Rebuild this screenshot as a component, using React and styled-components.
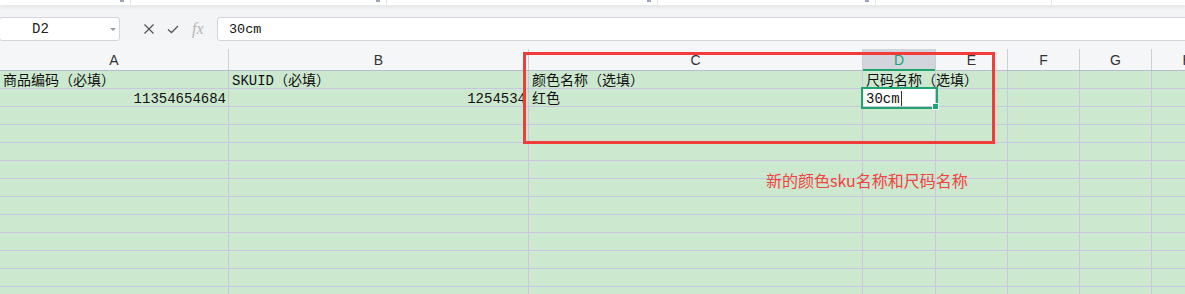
import React from "react"
import styled, { createGlobalStyle } from "styled-components"

const GlobalStyle = createGlobalStyle`
  html, body {
    margin: 0;
    padding: 0;
    background: #f3f4f6;
    overflow: hidden;
  }
  * { box-sizing: border-box; }
`

const COLS = ["A", "B", "C", "D", "E", "F", "G", "H"]
const TEMPLATE = "229px 300px 334px 73px 72px 72px 72px 72px"
const GRID = "#c8c6e0"
const GREEN = "#20a471"

const rows = [
  ["商品编码（必填）", "SKUID（必填）", "颜色名称（选填）", "尺码名称（选填）"],
  [
    { text: "11354654684", right: true },
    { text: "1254534", right: true },
    "红色",
    { text: "30cm", editing: true },
  ],
]

const Page = styled.div`
  position: relative;
  width: 1185px;
  height: 294px;
  overflow: hidden;
  font-family: "Liberation Mono", "Noto Sans CJK SC", monospace;
`

const TopStrip = styled.div`
  display: flex;
  height: 5px;
  background: #fff;
  box-shadow: 0 2px 4px rgba(0, 0, 0, 0.07);
  position: relative;
  z-index: 1;
`

const Tab = styled.div`
  width: ${(p) => p.$w}px;
  flex: ${(p) => (p.$w ? "none" : "1")};
  display: flex;
  justify-content: flex-end;
  border-right: ${(p) => (p.$w ? "1px solid #e4e6ea" : "none")};
`

const Mark = styled.span`
  width: 4px;
  height: 2px;
  margin-right: 6px;
  background: #9aa3b8;
`

const FormulaRow = styled.div`
  display: flex;
  align-items: stretch;
  height: 36px;
  padding-top: 12px;
  background: #f3f4f6;
`

const NameBox = styled.div`
  width: 121px;
  margin-left: -1px;
  height: 24px;
  background: #fff;
  border: 1px solid #d2d5db;
  border-radius: 3px;
  display: flex;
  align-items: center;
  padding-left: 32px;
  font-size: 14px;
  color: #222;
`

const NameText = styled.span`
  flex: 1;
`

const Caret = styled.span`
  width: 0;
  height: 0;
  margin-right: 3px;
  border-left: 3px solid transparent;
  border-right: 3px solid transparent;
  border-top: 3px solid #9a9a9a;
`

const Tools = styled.div`
  width: 97px;
  display: flex;
  align-items: center;
  padding-left: 23px;
  gap: 12px;
`

const Fx = styled.span`
  font-family: "Liberation Serif", serif;
  font-style: italic;
  font-size: 16px;
  color: #b4b4b4;
  margin-left: 1px;
`

const FormulaInput = styled.div`
  flex: 1;
  height: 24px;
  margin-right: -4px;
  background: #fff;
  border: 1px solid #d2d5db;
  border-radius: 3px;
  display: flex;
  align-items: center;
  padding-left: 11px;
  font-size: 13.5px;
  color: #111;
`

const HeaderRow = styled.div`
  display: grid;
  grid-template-columns: ${TEMPLATE};
  height: 30px;
  align-items: end;
  background: #f5f6f8;
  border-bottom: 1px solid #b9bccb;
`

const HeaderCell = styled.div`
  display: flex;
  align-items: center;
  justify-content: center;
  border-right: 1px solid #cbcdd8;
  font-family: "Liberation Sans", "Noto Sans CJK SC", sans-serif;
  font-size: 14px;
  color: ${(p) => (p.$active ? GREEN : "#333")};
  background: ${(p) => (p.$active ? "#d3d5dd" : "transparent")};
  box-shadow: ${(p) => (p.$active ? `inset 0 -2px 0 ${GREEN}` : "none")};
  margin-bottom: ${(p) => (p.$active ? "-1px" : "0")};
  height: ${(p) => (p.$active ? "22px" : "21px")};
`

const Grid = styled.div`
  display: grid;
  grid-template-columns: ${TEMPLATE};
  grid-auto-rows: 18px;
  background: #cce8cf;
`

const Cell = styled.div`
  position: relative;
  border-right: 1px solid ${GRID};
  border-bottom: 1px solid ${GRID};
  padding: 2px 2px 0 3px;
  font-size: 14px;
  line-height: 16px;
  color: #111;
  white-space: nowrap;
  text-align: ${(p) => (p.$right ? "right" : "left")};
  overflow: ${(p) => (p.$right ? "hidden" : "visible")};
  z-index: ${(p) => (p.$editing ? 2 : 1)};
  background: ${(p) => (p.$editing ? "#fff" : "transparent")};
  box-shadow: ${(p) => (p.$editing ? `0 0 0 2px ${GREEN}` : "none")};

  ${(p) =>
    p.$editing &&
    `
    &::after {
      content: "";
      position: absolute;
      right: -4px;
      bottom: -4px;
      width: 5px;
      height: 5px;
      background: ${GREEN};
      border: 1px solid #fff;
    }
  `}
`

const Cursor = styled.span`
  display: inline-block;
  width: 1px;
  height: 15px;
  margin-left: 1px;
  vertical-align: -3px;
  background: #333;
`

const Highlight = styled.div`
  position: absolute;
  left: 523px;
  top: 52px;
  width: 472px;
  height: 92px;
  border: 3px solid #f23b3b;
  pointer-events: none;
  z-index: 5;
`

const Note = styled.div`
  position: absolute;
  left: 766px;
  top: 170px;
  font-family: "Noto Sans CJK SC", "Liberation Sans", sans-serif;
  font-size: 16px;
  line-height: 20px;
  color: #f0443f;
  z-index: 5;
`

function XIcon() {
  return (
    <svg width="12" height="12" viewBox="0 0 12 12" fill="none" stroke="#555" strokeWidth="1.3">
      <path d="M1.5 1.5 L10.5 10.5 M10.5 1.5 L1.5 10.5" />
    </svg>
  )
}

function CheckIcon() {
  return (
    <svg width="12" height="12" viewBox="0 0 12 12" fill="none" stroke="#555" strokeWidth="1.3">
      <path d="M1 6.5 L4.5 9.5 L11 3" />
    </svg>
  )
}

function Sheet() {
  const allRows = [...rows]
  while (allRows.length < 13) allRows.push([])

  return (
    <Grid>
      {allRows.map((row, r) =>
        COLS.map((_, c) => {
          const raw = row[c]
          const cell = typeof raw === "string" ? { text: raw } : raw || {}
          return (
            <Cell key={`${r}-${c}`} $right={cell.right} $editing={cell.editing}>
              {cell.text}
              {cell.editing && <Cursor />}
            </Cell>
          )
        })
      )}
    </Grid>
  )
}

export default function App() {
  return (
    <Page>
      <GlobalStyle />
      <TopStrip>
        {[131, 256, 271, 218, 176].map((w, i) => (
          <Tab key={i} $w={w}>
            {i < 4 && <Mark />}
          </Tab>
        ))}
        <Tab />
      </TopStrip>

      <FormulaRow>
        <NameBox>
          <NameText>D2</NameText>
          <Caret />
        </NameBox>
        <Tools>
          <XIcon />
          <CheckIcon />
          <Fx>fx</Fx>
        </Tools>
        <FormulaInput>30cm</FormulaInput>
      </FormulaRow>

      <HeaderRow>
        {COLS.map((c) => (
          <HeaderCell key={c} $active={c === "D"}>
            {c}
          </HeaderCell>
        ))}
      </HeaderRow>

      <Sheet />

      <Highlight />
      <Note>新的颜色sku名称和尺码名称</Note>
    </Page>
  )
}
